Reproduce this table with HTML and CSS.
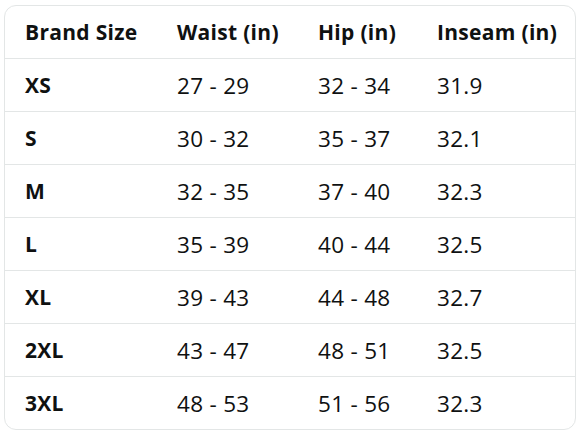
FILE: index.html
```html
<!DOCTYPE html>
<html>
<head>
<meta charset="utf-8">
<link rel="stylesheet" href="styles.css">
</head>
<body>
<div class="wrap">
<table class="size-table">
  <thead>
    <tr><th>Brand Size</th><th>Waist (in)</th><th>Hip (in)</th><th>Inseam (in)</th></tr>
  </thead>
  <tbody>
    <tr><td class="size">XS</td><td>27 - 29</td><td>32 - 34</td><td>31.9</td></tr>
    <tr><td class="size">S</td><td>30 - 32</td><td>35 - 37</td><td>32.1</td></tr>
    <tr><td class="size">M</td><td>32 - 35</td><td>37 - 40</td><td>32.3</td></tr>
    <tr><td class="size">L</td><td>35 - 39</td><td>40 - 44</td><td>32.5</td></tr>
    <tr><td class="size">XL</td><td>39 - 43</td><td>44 - 48</td><td>32.7</td></tr>
    <tr><td class="size">2XL</td><td>43 - 47</td><td>48 - 51</td><td>32.5</td></tr>
    <tr><td class="size">3XL</td><td>48 - 53</td><td>51 - 56</td><td>32.3</td></tr>
  </tbody>
</table>
</div>
</body>
</html>
```
FILE: styles.css
```css
html, body {
  margin: 0;
  padding: 0;
  background: #ffffff;
}
.wrap {
  padding: 5px 0 0 4px;
}
.size-table {
  width: 572px;
  border-collapse: separate;
  border-spacing: 0;
  border: 1px solid #e3e6e6;
  border-radius: 12px;
  font-family: "Open Sans", "Noto Sans", sans-serif;
  font-size: 21px;
  letter-spacing: 0.3px;
  color: #0f1111;
  table-layout: fixed;
}
.size-table th, .size-table td {
  height: 52px;
  padding: 0 0 0 20px;
  text-align: left;
  vertical-align: middle;
  border-bottom: 1px solid #e3e6e6;
  white-space: nowrap;
}
.size-table td {
  font-size: 22.5px;
}
.size-table tbody tr:last-child td {
  border-bottom: none;
}
.size-table th {
  font-weight: 700;
}
.size-table td.size {
  font-weight: 700;
  font-size: 21px;
}
.size-table th:nth-child(1) { width: 132px; }
.size-table th:nth-child(2) { width: 121px; }
.size-table th:nth-child(3) { width: 99px; }
```
